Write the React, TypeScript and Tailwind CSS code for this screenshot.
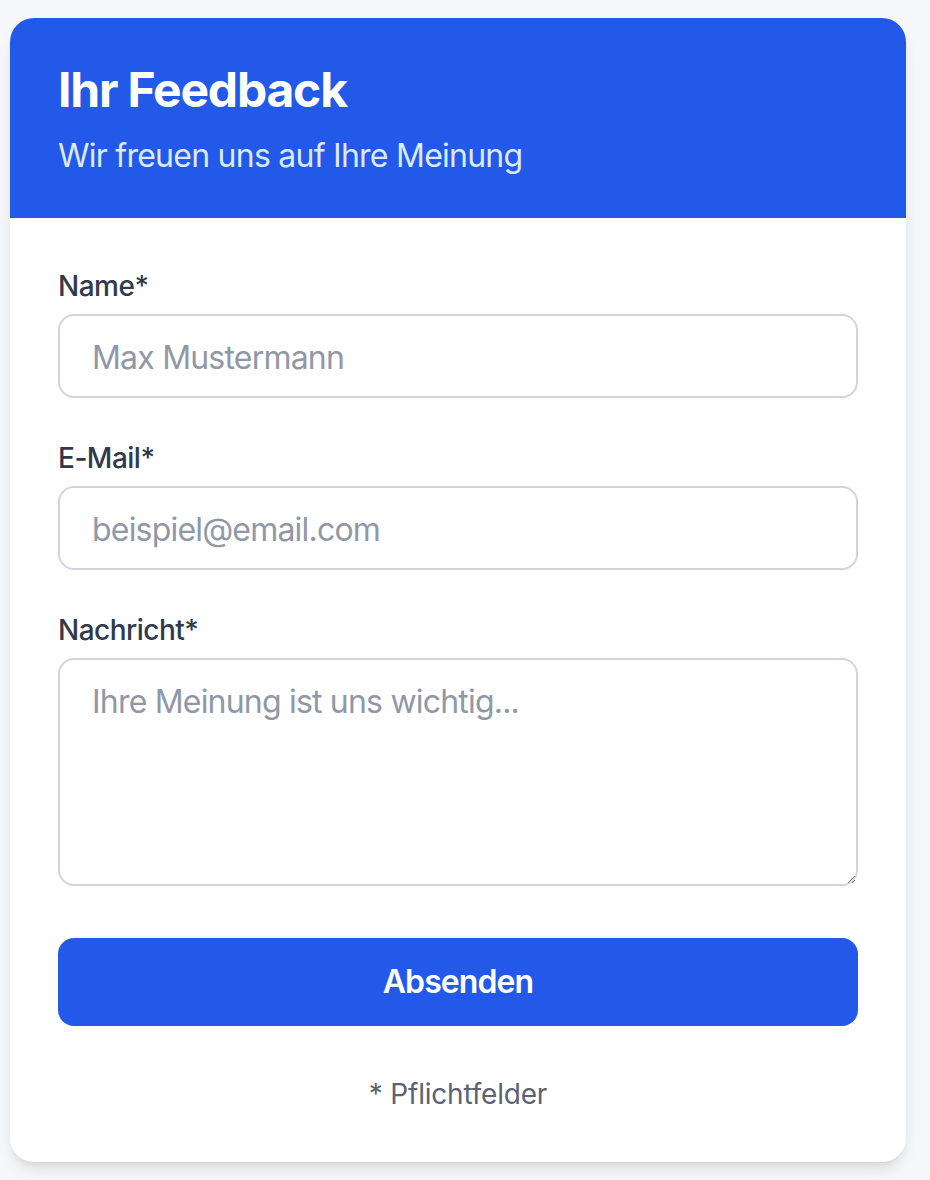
import React from "react";

const font = { fontFamily: "Inter, 'Noto Sans', sans-serif" };

const Field: React.FC<{ label: string; children?: React.ReactNode }> = ({
  label,
  children,
}) => (
  <div className="flex flex-col">
    <label className="text-[28px] leading-[40px] font-medium text-[#2f3a4b] tracking-[-0.5px] mb-2">
      {label}
    </label>
    {children}
  </div>
);

const inputCls =
  "w-full border-2 border-[#d1d5db] rounded-2xl px-8 pt-[18px] pb-[14px] text-[32px] leading-[48px] tracking-[-0.8px] text-gray-800 placeholder:text-[#9098a5] outline-none bg-white";

export default function App() {
  return (
    <div className="min-h-[1180px] bg-[#f6f7f9] pt-[18px] pl-[10px]" style={font}>
      <div className="w-[896px] bg-white rounded-3xl shadow-lg overflow-hidden">
        <div className="bg-[#2359e8] px-12 pt-10 pb-[38px]">
          <h1 className="text-[48px] leading-[64px] font-bold text-white tracking-[-1.2px]">
            Ihr Feedback
          </h1>
          <p className="mt-[10px] text-[32px] leading-[48px] text-[#dbeafe] tracking-[-0.75px]">
            Wir freuen uns auf Ihre Meinung
          </p>
        </div>
        <form className="p-12 flex flex-col" onSubmit={(e) => e.preventDefault()}>
          <div className="flex flex-col gap-10">
            <Field label="Name*">
              <input className={inputCls} placeholder="Max Mustermann" />
            </Field>
            <Field label="E-Mail*">
              <input className={inputCls} placeholder="beispiel@email.com" />
            </Field>
            <Field label="Nachricht*">
              <textarea
                rows={4}
                className={inputCls + " block h-[228px]"}
                placeholder="Ihre Meinung ist uns wichtig..."
              />
            </Field>
          </div>
          <button
            type="submit"
            className="mt-[52px] w-full h-[88px] bg-[#2359e8] text-white rounded-2xl text-[32px] font-semibold tracking-[-0.9px]"
          >
            Absenden
          </button>
          <p className="mt-12 text-center text-[28px] leading-[40px] text-[#5b6372] tracking-[-0.2px]">
            * Pflichtfelder
          </p>
        </form>
      </div>
    </div>
  );
}
